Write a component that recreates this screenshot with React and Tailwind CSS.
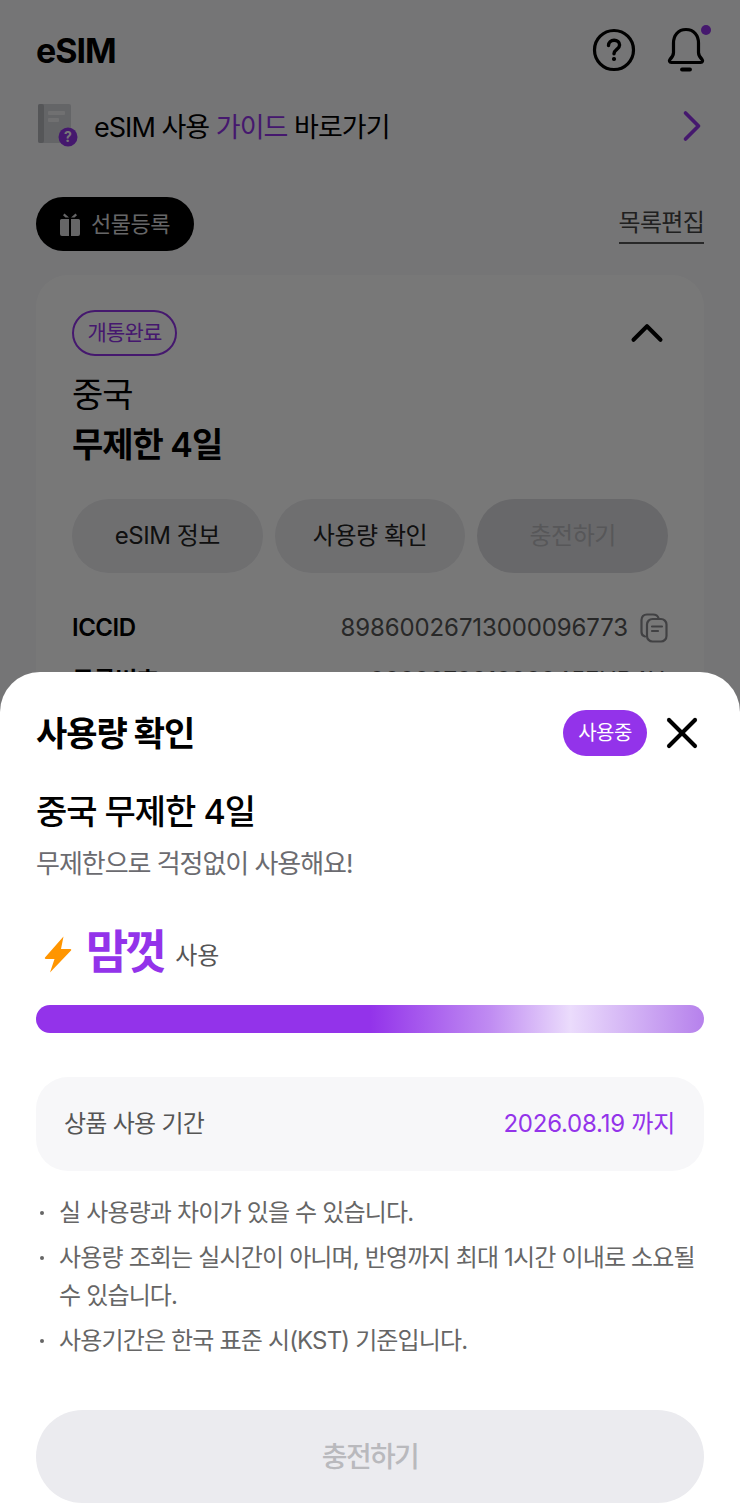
import { X, ChevronRight, ChevronUp } from "lucide-react";

const font = { fontFamily: 'Inter, "Noto Sans CJK KR", sans-serif' };

function BookIcon() {
  return (
    <svg width="42" height="44" viewBox="0 0 42 44" className="shrink-0">
      <rect x="0" y="0" width="33" height="39" rx="2" fill="#d5d6da" />
      <rect x="0" y="0" width="6" height="39" rx="2" fill="#b4b6bc" />
      <rect x="10" y="7" width="17" height="4" rx="1" fill="#eeeef0" />
      <rect x="10" y="14" width="11" height="4" rx="1" fill="#eeeef0" />
      <circle cx="30" cy="33" r="9.5" fill="#9333ea" />
      <text x="30" y="38" textAnchor="middle" fontSize="14" fontWeight="700" fill="#fff" fontFamily="Inter">?</text>
    </svg>
  );
}

function HelpIcon() {
  return (
    <svg width="44" height="44" viewBox="0 0 44 44" fill="none" stroke="#000" strokeWidth="3.2" strokeLinecap="round">
      <circle cx="22" cy="22" r="19.5" />
      <path d="M16.5 17.5c0-3.2 2.5-5.3 5.6-5.3s5.5 2 5.5 4.8c0 4.4-5.6 4.4-5.6 8.8" strokeWidth="3.4" />
      <circle cx="22" cy="31" r="1.4" fill="#000" stroke="#000" strokeWidth="1.4" />
    </svg>
  );
}

function BellIcon() {
  return (
    <svg width="48" height="46" viewBox="0 0 48 46" fill="none" stroke="#000" strokeWidth="3.2" strokeLinecap="round" strokeLinejoin="round">
      <path d="M24 2.500c-8 0-12.500 6-12.500 13.500v9.500c0 3-1.200 4.700-3.600 7-1 1.100-.4 3 1.400 3h29.400c1.800 0 2.400-1.900 1.400-3-2.400-2.300-3.600-4-3.600-7V16c0-7.500-4.500-13.500-12.500-13.500z" />
      <path d="M20 42.500h8" strokeWidth="3.8" />
    </svg>
  );
}

function GiftIcon() {
  return (
    <svg width="20" height="23" viewBox="0 0 20 23" fill="#d9d9dc">
      <path d="M0 7.500A1.500 1.500 0 0 1 1.500 6H9v17H2a2 2 0 0 1-2-2zM11 6h7.500A1.500 1.500 0 0 1 20 7.500V21a2 2 0 0 1-2 2h-7z" />
      <path d="M4.500 0.500 9 4.500H5.500L3 2.200zM15.500 0.500 11 4.500h3.500L17 2.200z" />
    </svg>
  );
}

function CopyIcon() {
  return (
    <svg width="28" height="30" viewBox="0 0 28 30" fill="none" stroke="#8b8b8f" strokeWidth="2.2" strokeLinecap="round" strokeLinejoin="round" className="shrink-0">
      <path d="M5 23.500c-2-.5-3.500-2-3.500-4.500V7c0-3.300 2-5.500 5.500-5.500h6c3 0 4.800 1.400 5.500 3.500" />
      <rect x="7" y="6" width="19.500" height="22.500" rx="5.500" fill="#fff" />
      <path d="M12 13.500h10M12 18h6" />
    </svg>
  );
}

function BoltIcon() {
  return (
    <svg width="28" height="37" viewBox="0 0 28 37" className="mt-[6px] shrink-0">
      <path d="M19.500 0.500 1 21.500c-.5.700 0 1.500.8 1.500h8.700L6 36.500 27 14.500c.6-.7.100-1.500-.7-1.500H17z" fill="#ff9500" />
    </svg>
  );
}

const notes = [
  "실 사용량과 차이가 있을 수 있습니다.",
  "사용량 조회는 실시간이 아니며, 반영까지 최대 1시간 이내로 소요될 수 있습니다.",
  "사용기간은 한국 표준 시(KST) 기준입니다.",
];

export default function App() {
  return (
    <div style={font} className="relative h-[1510px] w-[740px] overflow-hidden bg-[#f8f8fa] text-black">
      {/* Page behind the sheet */}
      <div className="px-9">
        <header className="flex h-[100px] items-center justify-between">
          <h1 className="text-[34px] font-bold tracking-[-0.03em]">eSIM</h1>
          <div className="flex items-center gap-[26px]">
            <HelpIcon />
            <div className="relative -mr-[6px]">
              <BellIcon />
              <span className="absolute -top-[2px] -right-[1px] h-[10px] w-[10px] rounded-full bg-[#9333ea]" />
            </div>
          </div>
        </header>

        <div className="flex h-[52px] items-center justify-between pl-[2px]">
          <div className="flex items-center gap-[14px]">
            <BookIcon />
            <span className="pt-1 text-[27px] tracking-[-0.036em]">
              eSIM 사용 <span className="text-[#9333ea]">가이드</span> 바로가기
            </span>
          </div>
          <ChevronRight size={52} strokeWidth={1.7} className="-mr-[14px] text-[#9333ea]" />
        </div>

        <div className="mt-[45px] flex items-center justify-between">
          <button className="flex h-[54px] w-[158px] items-center justify-center gap-[11px] rounded-full bg-black text-[22px] tracking-[-0.02em] text-[#d9d9dc]">
            <GiftIcon />
            선물등록
          </button>
          <span className="border-b-2 border-[#555] pb-[1px] text-[24px] tracking-[-0.03em] text-[#444]">목록편집</span>
        </div>

        <section className="mt-6 rounded-[32px] bg-white px-9 pt-[35px] pb-10">
          <div className="flex items-center justify-between">
            <span className="flex h-[46px] w-[105px] items-center justify-center rounded-full border-2 border-[#9333ea] text-[21px] tracking-[-0.04em] text-[#9333ea]">
              개통완료
            </span>
            <ChevronUp size={54} strokeWidth={1.8} className="-my-1 -mr-[6px]" />
          </div>
          <p className="mt-[14px] text-[34px] leading-[50px] tracking-[-0.03em]">중국</p>
          <p className="text-[34px] leading-[50px] font-semibold tracking-[-0.03em]">무제한 4일</p>
          <div className="mt-[29px] grid grid-cols-3 gap-[12px]">
            <button className="h-[74px] rounded-full bg-[#ebebef] text-[24px] tracking-[-0.02em] text-[#222]">eSIM 정보</button>
            <button className="h-[74px] rounded-full bg-[#ebebef] text-[24px] tracking-[-0.02em] text-[#222]">사용량 확인</button>
            <button className="h-[74px] rounded-full bg-[#dedee2] text-[24px] tracking-[-0.02em] text-[#b9b9bd]">충전하기</button>
          </div>
          <div className="mt-[37px] flex items-center justify-between">
            <span className="text-[24px] font-semibold tracking-[-0.02em]">ICCID</span>
            <span className="flex items-center gap-3 text-[24px] tracking-[-0.005em] text-[#555]">
              89860026713000096773
              <CopyIcon />
            </span>
          </div>
          <div className="mt-[17px] flex items-center justify-between">
            <span className="text-[24px] font-semibold tracking-[-0.02em]">등록번호</span>
            <span className="pr-[3px] text-[24px] tracking-[-0.01em] text-[#555]">000007001000045FUB4H</span>
          </div>
        </section>
      </div>

      {/* Dim layer */}
      <div className="absolute inset-0 bg-black/53" />

      {/* Bottom sheet */}
      <div className="absolute inset-x-0 bottom-0 h-[838px] rounded-t-[40px] bg-white px-9 pt-[38px]">
        <div className="flex h-[46px] items-center justify-between">
          <h2 className="text-[34px] font-bold tracking-[-0.03em]">사용량 확인</h2>
          <div className="flex items-center gap-[9px]">
            <span className="flex h-[46px] w-[84px] items-center justify-center rounded-full bg-[#9333ea] text-[20px] tracking-[-0.03em] text-white">
              사용중
            </span>
            <X size={52} strokeWidth={1.9} className="-my-2 -mr-1" />
          </div>
        </div>

        <p className="mt-[34px] text-[34px] leading-[44px] font-medium tracking-[-0.03em]">중국 무제한 4일</p>
        <p className="mt-[12px] text-[26px] leading-[36px] tracking-[-0.04em] text-[#6b6b70]">무제한으로 걱정없이 사용해요!</p>

        <div className="mt-[39px] flex h-[60px] items-center pl-2">
          <BoltIcon />
          <span className="ml-[14px] text-[46px] font-bold tracking-[-0.07em] text-[#9333ea]">맘껏</span>
          <span className="mt-[10px] ml-[11px] text-[24px] text-[#555]">사용</span>
        </div>

        <div className="mt-[24px] h-[28px] rounded-full bg-[linear-gradient(90deg,#9333ea_0%,#9333ea_50%,#c08cf2_68%,#ebdcfc_80%,#b681ec_100%)]" />

        <div className="mt-[44px] flex h-[94px] items-center justify-between rounded-[32px] bg-[#f7f7f9] pr-[29px] pl-[28px] text-[24px]">
          <span className="tracking-[-0.03em] text-[#555]">상품 사용 기간</span>
          <span className="tracking-[-0.01em] text-[#9333ea]">2026.08.19 까지</span>
        </div>

        <ul className="mt-[23px] flex flex-col gap-[7px] text-[24px] leading-[38px] tracking-[-0.035em] text-[#666]">
          {notes.map((note) => (
            <li key={note} className="flex">
              <span className="mt-[17px] mr-[15px] ml-1 h-1 w-1 shrink-0 rounded-full bg-[#666]" />
              <span>{note}</span>
            </li>
          ))}
        </ul>

        <button className="mt-[50px] h-[93px] w-full rounded-full bg-[#ebebef] text-[28px] font-medium tracking-[-0.06em] text-[#b9b9bd]">
          충전하기
        </button>
      </div>
    </div>
  );
}
